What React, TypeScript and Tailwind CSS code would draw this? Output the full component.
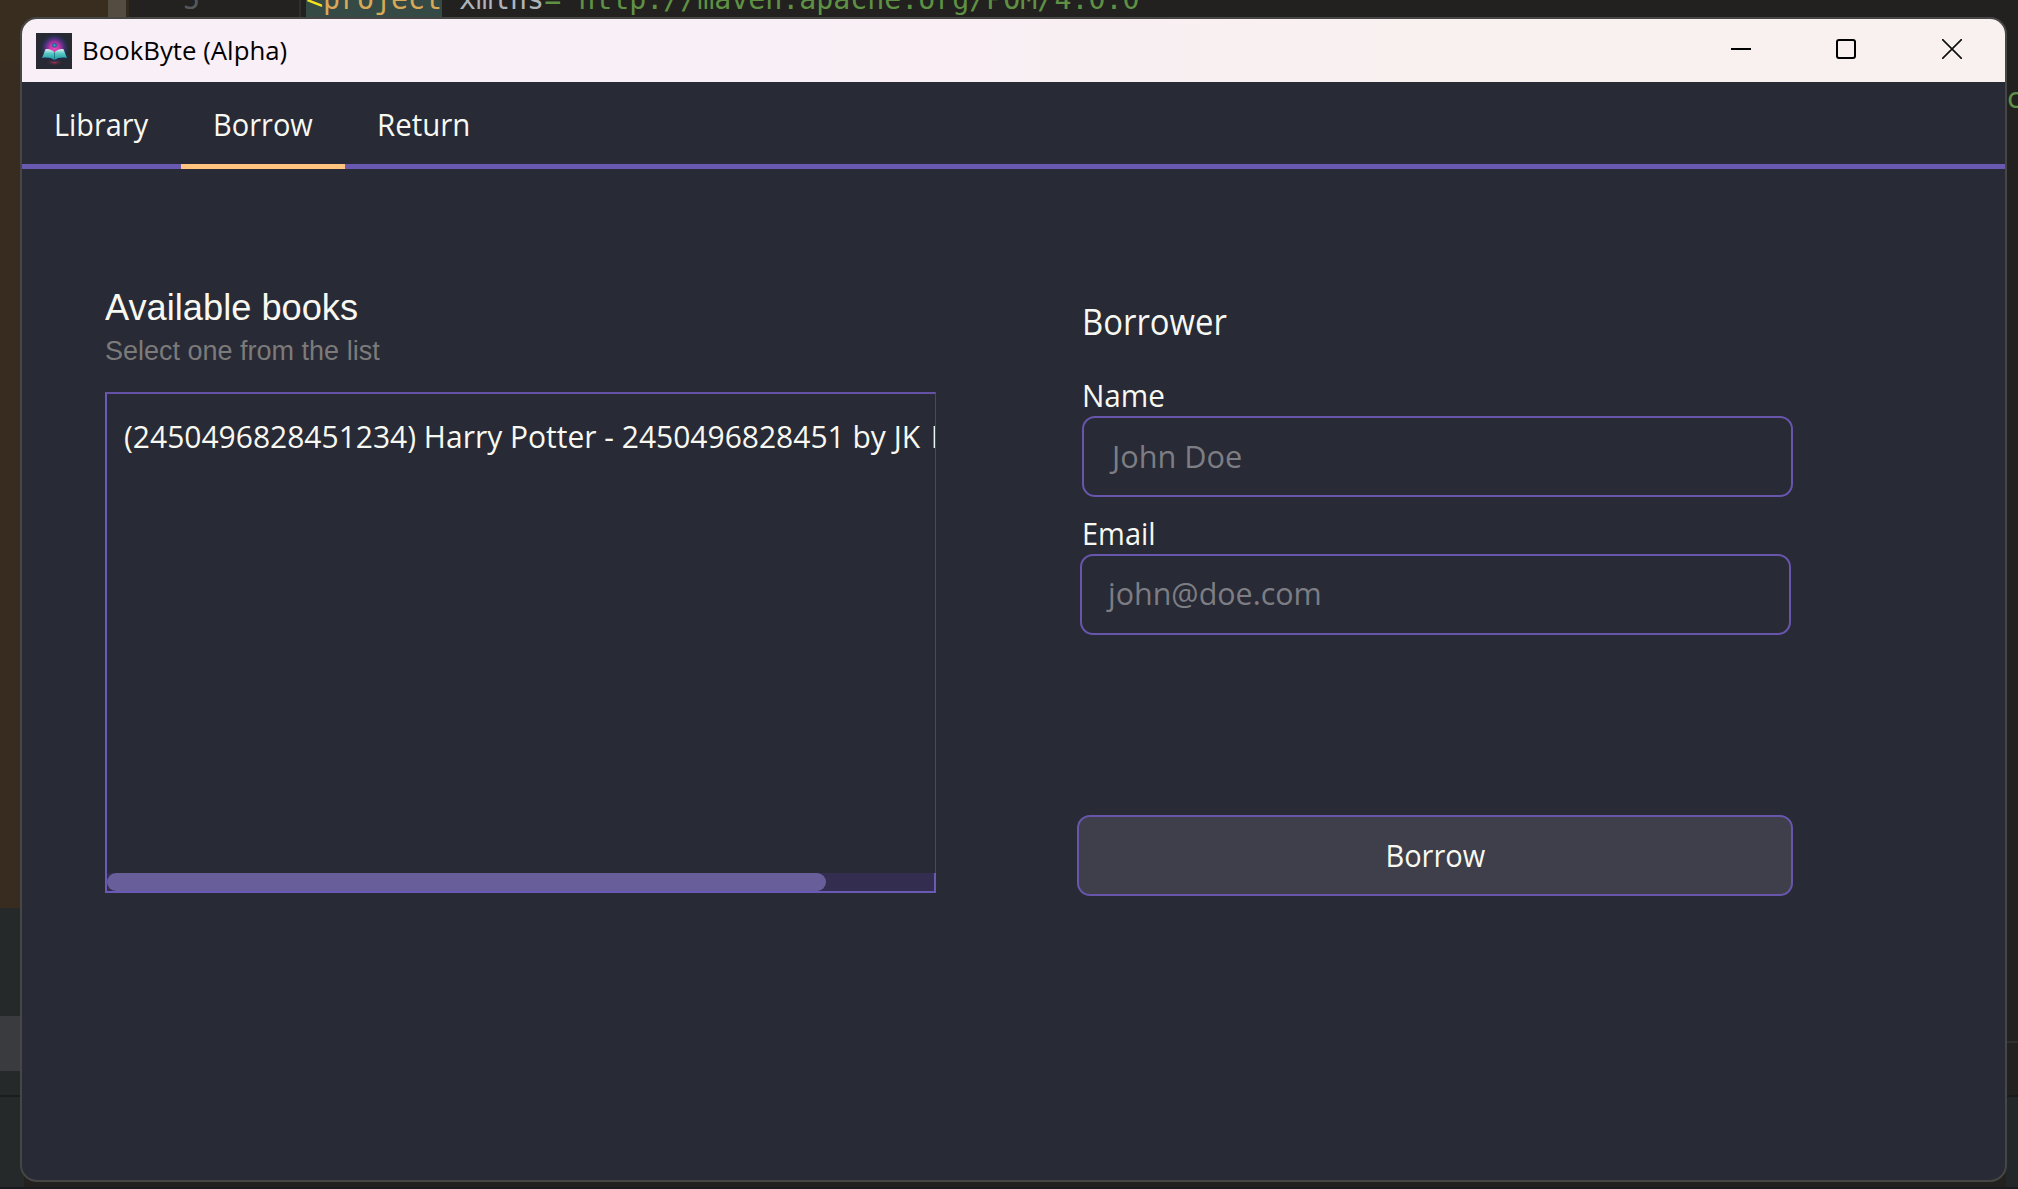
import React from "react";

function AppIcon() {
  return (
    <svg width="36" height="36" viewBox="0 0 36 36" className="block shrink-0">
      <defs>
        <radialGradient id="halo" cx="18.5" cy="15" r="14" gradientUnits="userSpaceOnUse">
          <stop offset="0" stopColor="#f04aba" />
          <stop offset="0.35" stopColor="#c433a8" />
          <stop offset="0.62" stopColor="#5c3186" />
          <stop offset="0.82" stopColor="#2c3054" />
          <stop offset="1" stopColor="#272a32" />
        </radialGradient>
        <radialGradient id="glow" cx="0.5" cy="0.5" r="0.5">
          <stop offset="0" stopColor="#a03058" />
          <stop offset="1" stopColor="#272a32" stopOpacity="0" />
        </radialGradient>
        <linearGradient id="page" x1="0" y1="0" x2="0" y2="1">
          <stop offset="0" stopColor="#dff1ec" />
          <stop offset="0.4" stopColor="#58c8c4" />
          <stop offset="1" stopColor="#1e97a0" />
        </linearGradient>
      </defs>
      <rect width="36" height="36" fill="#272a32" />
      <circle cx="18.5" cy="15" r="14" fill="url(#halo)" />
      <ellipse cx="18.5" cy="29.5" rx="9" ry="3.5" fill="url(#glow)" />
      <path d="M5 26.5 L7 20 H30 L32 26.5 C27 26 22 26.5 18.5 28.5 C15 26.5 10 26 5 26.5Z" fill="#232a48" />
      <path d="M6 25 L9.5 16.2 C13 15.6 16.5 17 18.5 19.3 V27 C15 24.6 11 24 6 25Z" fill="url(#page)" />
      <path d="M31 25 L27.5 16.2 C24 15.6 20.5 17 18.5 19.3 V27 C22 24.6 26 24 31 25Z" fill="url(#page)" />
      <path d="M18.5 19.3V27" stroke="#1a6f80" strokeWidth="0.7" />
      <circle cx="18.5" cy="12.3" r="2.5" fill="#33609c" />
      <circle cx="18.5" cy="12.3" r="1.1" fill="#39b3b7" />
    </svg>
  );
}

/** Editor window that shows around the edges of the application window. */
function Backdrop() {
  return (
    <div className="absolute inset-0 flex flex-col bg-[#22211f]">
      <div className="flex h-[60px] overflow-hidden font-['DejaVu_Sans_Mono',monospace] text-[28.25px] leading-[33px] whitespace-pre">
        <div className="w-[108px] bg-[#392d20]" />
        <div className="w-[18px] bg-[#544b41]" />
        <div className="w-[3px] bg-[#33291e]" />
        <div className="w-[172px] border-r-2 border-[#302f2d] bg-[#232220]">
          <div className="-mt-[17px] pl-[54px] text-[#55585c]">5</div>
        </div>
        <div className="-mt-[17px] pl-[5px] text-[#5f9145]">
          <span className="inline-block h-[60px] bg-[#364a45] text-[#d9a955]">
            <span className="text-[#f5e11c]">&lt;</span>project
          </span>
          <span className="text-[#b0b4ba]"> xmlns</span>="http://maven.apache.org/POM/4.0.0
        </div>
      </div>
      <div className="flex flex-1 justify-between">
        <div className="flex w-6 flex-col">
          <div className="h-[848px] bg-[#372c1f]" />
          <div className="h-[108px] bg-[#26292a]" />
          <div className="h-[55px] bg-[#3a3b3e]" />
          <div className="h-[24px] bg-[#26292a]" />
          <div className="h-[2px] bg-[#1b1c1d]" />
          <div className="flex-1 bg-[#26292a]" />
        </div>
        <div className="flex w-[12px] flex-col overflow-hidden">
          <div className="h-[981px] font-['DejaVu_Sans_Mono',monospace] text-[28.25px] leading-[33px] text-[#5f9145]">
            <div className="pt-[22px]">c</div>
          </div>
          <div className="h-[2px] bg-[#302f2f]" />
          <div className="h-[52px]" />
          <div className="h-[2px] bg-[#1a1a19]" />
          <div className="flex-1 bg-[#242729]" />
        </div>
      </div>
      <div className="h-[2px] bg-[#1a1b1e]" />
    </div>
  );
}

function TitleBar() {
  return (
    <header className="flex h-[63px] items-center justify-between bg-linear-to-r from-[#f9eff7] from-35% to-[#f9f0f0] to-70% pl-[14px] text-black">
      <div className="flex items-center">
        <AppIcon />
        <div className="-mt-[2px] ml-[9.5px] origin-left scale-x-[0.992] text-[26px] leading-9">BookByte (Alpha)</div>
      </div>
      <div className="flex items-center pr-[43px] pb-[3px]">
        <svg width="20" height="20" viewBox="0 0 20 20">
          <path d="M0 10H20" stroke="#000" strokeWidth="2" />
        </svg>
        <svg width="20" height="20" viewBox="0 0 20 20" className="ml-[85px]">
          <rect x="1" y="1" width="18" height="18" rx="2" fill="none" stroke="#000" strokeWidth="2" />
        </svg>
        <svg width="20" height="20" viewBox="0 0 20 20" className="ml-[86px]">
          <path d="M0.5 0.5L19.5 19.5M19.5 0.5L0.5 19.5" stroke="#111" strokeWidth="1.7" strokeLinecap="round" />
        </svg>
      </div>
    </header>
  );
}

function Tabs() {
  return (
    <nav className="flex h-[87px] text-[31px] leading-[84px]">
      <div className="w-[159px] border-b-[5px] border-[#6a59b1] pl-[31.5px]">
        <div className="origin-left scale-x-[0.931]">Library</div>
      </div>
      <div className="w-[164px] border-b-[5px] border-[#ffc57f] pl-[32px]">
        <div className="origin-left scale-x-[0.936]">Borrow</div>
      </div>
      <div className="flex-1 border-b-[5px] border-[#6a59b1] pl-[32px]">
        <div className="w-24 origin-left scale-x-[0.95]">Return</div>
      </div>
    </nav>
  );
}

function BookList() {
  return (
    <section className="w-[831px] pt-[119px]">
      <h2 className="w-64 origin-left scale-x-[1.006] font-['Liberation_Sans',sans-serif] text-4xl leading-10">Available books</h2>
      <p className="mt-[5px] font-['Liberation_Sans',sans-serif] text-[27px] leading-9 text-[#7c7b7a]">
        Select one from the list
      </p>
      <div className="mt-[23px] flex h-[501px] flex-col justify-between">
        <div className="h-[481px] overflow-hidden border-t-2 border-r border-l-2 border-t-[#6452a7] border-r-[#4b4278] border-l-[#6a59b5] pt-[22px] pl-[17px]">
          <div className="w-[900px] origin-left scale-x-[0.9675] text-[31px] leading-10 whitespace-nowrap">
            (2450496828451234) Harry Potter - 2450496828451 by JK <span className="ml-[3px]">Rowling</span>
          </div>
        </div>
        <div className="h-5 border-x-2 border-b-2 border-[#6a59b5] bg-[#332e4f]">
          <div className="h-[18px] w-[719px] rounded-full bg-[#685e9a]" />
        </div>
      </div>
    </section>
  );
}

function BorrowForm() {
  return (
    <section className="w-[716px] pt-[129px]">
      <h2 className="ml-[5px] w-40 origin-left scale-x-[0.912] text-4xl leading-[48px]">Borrower</h2>
      <div className="mt-[31px] ml-[5px] text-[31px] leading-9">
        <div className="w-24 origin-left scale-x-[0.958]">Name</div>
      </div>
      <div className="mt-[3px] ml-[5px] h-[81px] w-[711px] rounded-[13px] border-2 border-[#6856ad] pl-[28px] text-[31px] leading-[76px] text-[#7d7d84]">
        <div className="w-36 origin-left scale-x-[0.99]">John Doe</div>
      </div>
      <div className="mt-[18px] ml-[5px] text-[31px] leading-9">
        <div className="w-24 origin-left scale-x-[0.935]">Email</div>
      </div>
      <div className="mt-[3px] ml-[3px] h-[81px] w-[711px] rounded-[13px] border-2 border-[#6856ad] pl-[26px] text-[31px] leading-[75px] text-[#7d7d84]">
        <div className="w-56 origin-left scale-x-[0.982]">john@doe.com</div>
      </div>
      <button className="mt-[180px] flex h-[81px] w-full items-center justify-center rounded-[13px] border-2 border-[#6856ad] bg-[#3e3f4a] pb-[2px] text-[31px] leading-9">
        <span className="inline-block scale-x-[0.936]">Borrow</span>
      </button>
    </section>
  );
}

export default function App() {
  return (
    <div className="relative h-[1189px] w-[2018px] overflow-hidden font-['Open_Sans','Noto_Sans',sans-serif]">
      <Backdrop />
      <div className="relative flex h-full pt-[17px] pb-[7px] pl-5">
        <main className="flex w-[1987px] flex-col overflow-hidden rounded-[17px] border-2 border-[#464645] bg-[#282a35] text-[#f8f8f2]">
          <TitleBar />
          <Tabs />
          <div className="flex flex-1 items-start gap-[141px] pl-[83px]">
            <BookList />
            <BorrowForm />
          </div>
        </main>
      </div>
    </div>
  );
}
